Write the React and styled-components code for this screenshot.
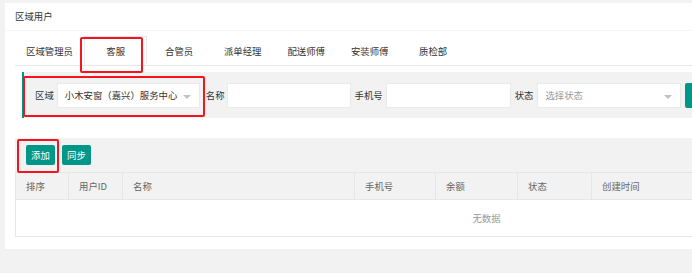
import React from "react";
import styled, { createGlobalStyle } from "styled-components";

const Global = createGlobalStyle`
  html, body { margin: 0; padding: 0; background: #f2f2f2; }
  body {
    font-family: "Noto Sans CJK SC", "Noto Sans", sans-serif;
    font-size: 9.4px;
    color: #333;
  }
`;

const Page = styled.div`
  position: relative;
  width: 692px;
  height: 273px;
  overflow: hidden;
  padding: 3px 0 0 5px;
  box-sizing: border-box;
`;

const Card = styled.div`
  width: 962px;
  height: 246px;
  background: #fff;
  box-sizing: border-box;
`;

const CardHeader = styled.div`
  height: 28px;
  line-height: 27px;
  padding-left: 10px;
  border-bottom: 1px solid #f6f6f6;
  box-sizing: border-box;
  color: #333;
`;

const CardBody = styled.div`
  padding: 6px 10px 0 10px;
`;

const TabBar = styled.div`
  display: flex;
  height: 28px;
  border-bottom: 1px solid #e6e6e6;
`;

const Tab = styled.div`
  min-width: 63.5px;
  padding: 0 10px;
  box-sizing: border-box;
  height: 29px;
  line-height: 28px;
  text-align: center;
  color: #333;
  background: ${(p) => (p.$active ? "#fff" : "transparent")};
  border: 1px solid ${(p) => (p.$active ? "#e6e6e6" : "transparent")};
  border-bottom-color: ${(p) => (p.$active ? "#fff" : "transparent")};
  margin-bottom: -1px;
  position: relative;
  top: -1px;
`;

const Quote = styled.div`
  margin: 6px 0 0 7px;
  height: 46px;
  background: #f2f2f2;
  border-left: 2px solid #009688;
  display: flex;
  align-items: center;
  padding-left: 11px;
  box-sizing: border-box;
  white-space: nowrap;
`;

const Label = styled.span`
  color: #333;
  margin-right: ${(p) => p.$gap || 3}px;
`;

const Field = styled.div`
  position: relative;
  width: ${(p) => p.$w}px;
  height: 25px;
  background: #fff;
  border: 1px solid #eaeaea;
  box-sizing: border-box;
  margin-right: ${(p) => p.$mr || 4}px;
  display: flex;
  align-items: center;
  padding-left: 7px;
  color: ${(p) => (p.$placeholder ? "#9a9a9a" : "#333")};
`;

const Arrow = styled.span`
  position: absolute;
  right: 8px;
  top: 11px;
  width: 0;
  height: 0;
  border-left: 4px solid transparent;
  border-right: 4px solid transparent;
  border-top: 4px solid #c2c2c2;
`;

const QueryButton = styled.div`
  width: 40px;
  height: 25px;
  background: #009688;
  border-radius: 2px;
`;

const Spacer = styled.div`
  height: 20px;
`;

const Toolbar = styled.div`
  height: 34px;
  background: #f2f2f2;
  display: flex;
  align-items: center;
  gap: 7px;
  padding-left: 11px;
`;

const Btn = styled.div`
  width: 29px;
  height: 20px;
  line-height: 20px;
  text-align: center;
  background: #009688;
  color: #fff;
  border-radius: 2px;
`;

const Table = styled.div`
  width: 942px;
  border-left: 1px solid #e6e6e6;
  border-top: 1px solid #e6e6e6;
  border-bottom: 1px solid #e6e6e6;
  box-sizing: border-box;
`;

const HeadRow = styled.div`
  display: grid;
  grid-template-columns: 53px 54px 232px 81px 82px 74px 1fr;
  height: 26px;
  background: #f2f2f2;
  border-bottom: 1px solid #e6e6e6;
`;

const HeadCell = styled.div`
  padding-left: 10px;
  line-height: 26px;
  color: #666;
  border-right: 1px solid #e6e6e6;
`;

const Empty = styled.div`
  height: 36px;
  line-height: 36px;
  text-align: center;
  color: #999;
`;

const Mark = styled.div`
  position: absolute;
  left: ${(p) => p.$x}px;
  top: ${(p) => p.$y}px;
  width: ${(p) => p.$w}px;
  height: ${(p) => p.$h}px;
  border: 2px solid #f5141e;
  border-radius: 2px;
  box-sizing: border-box;
  pointer-events: none;
`;

const tabs = ["区域管理员", "客服", "合管员", "派单经理", "配送师傅", "安装师傅", "质检部"];
const cols = ["排序", "用户ID", "名称", "手机号", "余额", "状态", "创建时间"];

export default function App() {
  return (
    <>
      <Global />
      <Page>
        <Card>
          <CardHeader>区域用户</CardHeader>
          <CardBody>
            <TabBar>
              {tabs.map((t) => (
                <Tab key={t} $active={t === "客服"}>
                  {t}
                </Tab>
              ))}
            </TabBar>
            <Quote>
              <Label>区域</Label>
              <Field $w={143} $mr={6}>
                小木安窗（嘉兴）服务中心
                <Arrow />
              </Field>
              <Label $gap={2}>名称</Label>
              <Field $w={124} />
              <Label>手机号</Label>
              <Field $w={125} />
              <Label $gap={4}>状态</Label>
              <Field $w={144} $placeholder>
                选择状态
                <Arrow />
              </Field>
              <QueryButton />
            </Quote>
            <Spacer />
            <Toolbar>
              <Btn>添加</Btn>
              <Btn>同步</Btn>
            </Toolbar>
            <Table>
              <HeadRow>
                {cols.map((c) => (
                  <HeadCell key={c}>{c}</HeadCell>
                ))}
              </HeadRow>
              <Empty>无数据</Empty>
            </Table>
          </CardBody>
        </Card>
        <Mark $x={80} $y={37} $w={63} $h={36} />
        <Mark $x={23} $y={76} $w={182} $h={41} />
        <Mark $x={17} $y={139} $w={42} $h={34} />
      </Page>
    </>
  );
}
